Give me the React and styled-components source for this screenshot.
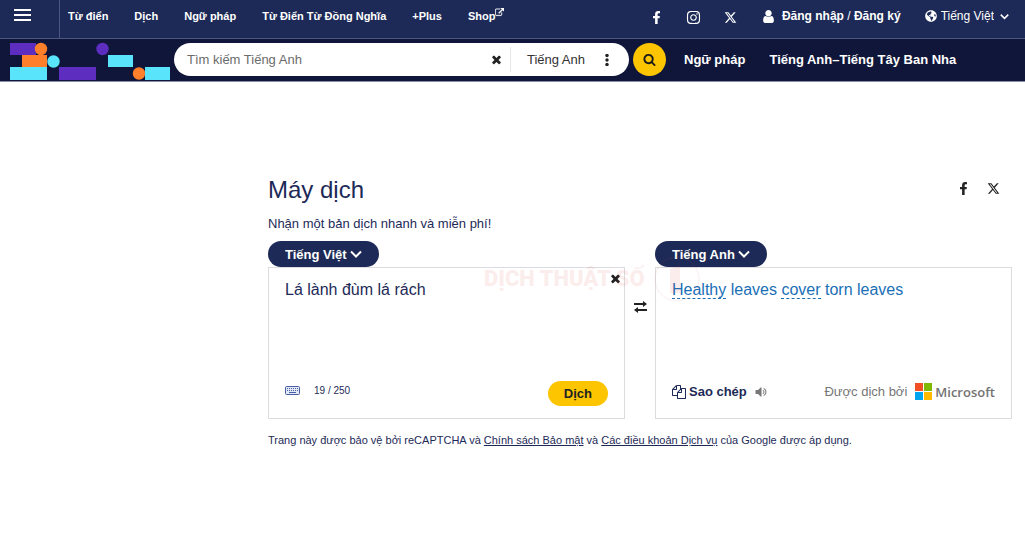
import React, { useState } from "react";
import styled, { createGlobalStyle } from "styled-components";
import { FaFacebookF, FaInstagram, FaGlobeAmericas } from "react-icons/fa";
import { FaXTwitter } from "react-icons/fa6";

const GlobalStyle = createGlobalStyle`
  * {
    box-sizing: border-box;
  }
  body {
    margin: 0;
    background: #fff;
    color: #1d2a57;
    font-family: "Liberation Sans", Arial, sans-serif;
    font-size: 13px;
  }
  button, input, select, textarea {
    font: inherit;
    color: inherit;
    border: 0;
    padding: 0;
    margin: 0;
    background: none;
    outline: 0;
  }
  button {
    cursor: pointer;
  }
  a {
    color: inherit;
  }
  svg {
    display: block;
    flex: none;
  }
`;

const TopBar = styled.header`
  display: flex;
  align-items: stretch;
  height: 39px;
  background: #1d2a57;
  border-bottom: 1px solid #4b5680;
  color: #fff;
`;

const MenuButton = styled.button`
  width: 60px;
  padding: 0 0 8px 14px;
  border-right: 1px solid #4b5680;
`;

const NavLinks = styled.nav`
  display: flex;
  gap: 26px;
  padding: 8px 0 0 8px;
  font-size: 11px;
  line-height: 16px;
  font-weight: 700;
`;

const NavLink = styled.a`
  display: flex;
  text-decoration: none;
  white-space: nowrap;
`;

const TopRight = styled.div`
  display: flex;
  gap: 24px;
  margin-left: auto;
  padding: 8px 16px 0 0;
  line-height: 16px;
`;

const Socials = styled.div`
  display: flex;
  align-items: center;
  gap: ${(props) => props.$gap};
  height: ${(props) => props.$height};
  color: ${(props) => props.$color};
`;

const IconLink = styled.a`
  display: flex;
`;

const Account = styled.div`
  display: flex;
  align-items: center;
  gap: 6px;
  height: 16px;
  white-space: nowrap;
  font-size: 12px;

  a {
    font-weight: 700;
    text-decoration: none;
  }
`;

const SiteLanguage = styled.label`
  display: flex;
  gap: 4px;
  align-items: center;
  height: 16px;
  font-size: 12px;
`;

const SelectBox = styled.span`
  display: grid;
  align-items: center;

  select,
  svg {
    grid-area: 1 / 1;
  }
  select {
    appearance: none;
    field-sizing: content;
    padding-right: ${(props) => props.$space};
    cursor: pointer;
  }
  option {
    color: #1d2a57;
  }
  svg {
    justify-self: end;
    pointer-events: none;
  }
`;

const SearchBar = styled.div`
  display: flex;
  align-items: center;
  height: 43px;
  padding: 0 0 1px 10px;
  background: #0f163a;
  border-bottom: 1px solid #8b8fa6;
  color: #fff;
`;

const LogoLink = styled.a`
  align-self: flex-end;
`;

const SearchForm = styled.form`
  display: flex;
  align-items: center;
  gap: 4px;
  flex: 0 1 492px;
  margin: 0 18px 0 4px;
`;

const SearchField = styled.div`
  display: flex;
  align-items: center;
  flex: 1;
  height: 33px;
  border-radius: 17px;
  background: #fff;
  color: #222;

  input {
    flex: 1;
    min-width: 0;
    padding-left: 13px;
  }
  input::placeholder {
    color: #6b6b6b;
  }
`;

const Dictionary = styled.button`
  display: flex;
  align-items: center;
  gap: 16px;
  height: 25px;
  margin-left: 7px;
  padding: 0 16px;
  border-left: 1px solid #e6e6ea;
  color: #333;
`;

const SearchButton = styled.button`
  display: grid;
  place-items: center;
  width: 33px;
  height: 33px;
  border-radius: 50%;
  background: #fdc400;
  color: #1a1a1a;
`;

const SearchLinks = styled.nav`
  display: flex;
  gap: 24px;
  font-weight: 700;
  white-space: nowrap;
`;

const Main = styled.main`
  padding: 92px 13px 0 268px;
`;

const Heading = styled.div`
  display: flex;
  justify-content: space-between;
  padding-right: 12px;
`;

const Title = styled.h1`
  margin: 0;
  font-size: 24px;
  line-height: 32px;
  font-weight: 400;
`;

const Intro = styled.p`
  margin: 10px 0 9px;
  line-height: 16px;
`;

const Translator = styled.div`
  position: relative;
  display: grid;
  grid-template-columns: 1fr 30px 1fr;
`;

const LanguagePill = styled.label`
  display: inline-flex;
  align-items: center;
  height: 26px;
  padding: 0 17px;
  border-radius: 13px;
  background: #1d2a57;
  color: #fff;
  font-weight: 700;
`;

const Panel = styled.div`
  display: flex;
  flex-direction: column;
  justify-content: space-between;
  height: 152px;
  padding: 12px 16px;
  border: 1px solid #dcdce0;
`;

const PanelTop = styled.div`
  display: flex;
  align-items: flex-start;
  margin-right: -14px;
`;

const SourceText = styled.textarea`
  flex: 1;
  height: 80px;
  resize: none;
  font-size: 16px;
  line-height: 20px;
`;

const IconButton = styled.button`
  margin: ${(props) => props.$margin};
`;

const Translation = styled.p`
  margin: 0;
  font-size: 16px;
  line-height: 20px;
  color: #1a6fb5;
`;

const Word = styled.a`
  text-decoration: none;
  border-bottom: 1px dashed #1a6fb5;
`;

const PanelFoot = styled.div`
  display: flex;
  align-items: center;
  height: 26px;
  padding-bottom: ${(props) => props.$lift};
`;

const Counter = styled.span`
  margin: 0 auto 6px 14px;
  font-size: 10px;
`;

const TranslateButton = styled.button`
  height: 25px;
  padding: 0 16px;
  border-radius: 13px;
  background: #fdc400;
  color: #222;
  font-weight: 700;
`;

const SwapButton = styled.button`
  align-self: start;
  justify-self: center;
  margin-top: 60px;
`;

const CopyButton = styled.button`
  display: flex;
  align-items: center;
  gap: 3px;
  margin-right: 8px;
  font-weight: 700;
`;

const Credit = styled.span`
  display: flex;
  align-items: center;
  gap: 8px;
  margin-left: auto;
  color: #767676;
`;

const Microsoft = styled.span`
  display: flex;
  align-items: center;
  gap: 3px;
  color: #737373;
  font-family: "Open Sans", sans-serif;
  font-weight: 600;
`;

const Legal = styled.p`
  margin: 14px 0 0;
  font-size: 11px;
  line-height: 14px;
`;

const Watermark = styled.div`
  position: absolute;
  top: 15px;
  left: calc(50% - 156px);
  display: flex;
  align-items: center;
  gap: 8px;
  opacity: 0.09;
  color: #e04848;
  pointer-events: none;
`;

const WatermarkName = styled.span`
  display: block;
  font-family: Roboto, sans-serif;
  font-size: 22px;
  line-height: 28px;
  font-weight: 900;
  white-space: nowrap;
`;

// 1792-unit icons share one wrapper
function Glyph({ d, size, color = "currentColor", outline = 0 }) {
  return (
    <svg
      width={size}
      height={size}
      viewBox="0 0 1792 1792"
      fill={color}
      stroke={color}
      strokeWidth={outline}
      aria-hidden="true"
    >
      <path d={d} />
    </svg>
  );
}

const icons = {
  external:
    "M1408 928v320q0 119-84.5 203.5t-203.5 84.5h-832q-119 0-203.5-84.5t-84.5-203.5v-832q0-119 84.5-203.5t203.5-84.5h704q14 0 23 9t9 23v64q0 14-9 23t-23 9h-704q-66 0-113 47t-47 113v832q0 66 47 113t113 47h832q66 0 113-47t47-113v-320q0-14 9-23t23-9h64q14 0 23 9t9 23zm384-864v512q0 26-19 45t-45 19-45-19l-176-176-652 652q-10 10-23 10t-23-10l-114-114q-10-10-10-23t10-23l652-652-176-176q-19-19-19-45t19-45 45-19h512q26 0 45 19t19 45z",
  times:
    "M1490 1322q0 40-28 68l-136 136q-28 28-68 28t-68-28l-294-294-294 294q-28 28-68 28t-68-28l-136-136q-28-28-28-68t28-68l294-294-294-294q-28-28-28-68t28-68l136-136q28-28 68-28t68 28l294 294 294-294q28-28 68-28t68 28l136 136q28 28 28 68t-28 68l-294 294 294 294q28 28 28 68z",
  search:
    "M1216 832q0-185-131.5-316.5t-316.5-131.5-316.5 131.5-131.5 316.5 131.5 316.5 316.5 131.5 316.5-131.5 131.5-316.5zm512 832q0 52-38 90t-90 38q-54 0-90-38l-343-342q-179 124-399 124-143 0-273.5-55.5t-225-150-150-225-55.5-273.5 55.5-273.5 150-225 225-150 273.5-55.5 273.5 55.5 225 150 150 225 55.5 273.5q0 220-124 399l343 343q37 37 37 90z",
  user: "M1536 1399q0 109-62.5 187t-150.5 78h-854q-88 0-150.5-78t-62.5-187q0-85 8.5-160.5t31.5-152 58.5-131 94-89 134.5-34.5q131 128 313 128t313-128q76 0 134.5 34.5t94 89 58.5 131 31.5 152 8.5 160.5zm-256-887q0 159-112.5 271.5t-271.5 112.5-271.5-112.5-112.5-271.5 112.5-271.5 271.5-112.5 271.5 112.5 112.5 271.5z",
  copy: "M1696 384q40 0 68 28t28 68v1216q0 40-28 68t-68 28h-960q-40 0-68-28t-28-68v-288h-544q-40 0-68-28t-28-68v-672q0-40 20-88t48-76l408-408q28-28 76-48t88-20h416q40 0 68 28t28 68v328q68-40 128-40h416zm-544 213l-299 299h299v-299zm-640-384l-299 299h299v-299zm196 647l316-316v-416h-384v416q0 40-28 68t-68 28h-416v640h512v-256q0-40 20-88t48-76zm956 804v-1152h-384v416q0 40-28 68t-68 28h-416v640h896z",
  volume:
    "M832 352v1088q0 26-19 45t-45 19-45-19l-333-333h-262q-26 0-45-19t-19-45v-384q0-26 19-45t45-19h262l333-333q19-19 45-19t45 19 19 45zm384 544q0 76-42.5 141.5t-112.5 93.5q-10 5-25 5-26 0-45-18.5t-19-45.5q0-21 12-35.5t29-25 34-23 29-36 12-56.5-12-56.5-29-36-34-23-29-25-12-35.5q0-27 19-45.5t45-18.5q15 0 25 5 70 27 112.5 93t42.5 142zm256 0q0 153-85 282.5t-225 188.5q-13 5-25 5-27 0-46-19t-19-45q0-39 39-59 56-29 76-44 74-54 115.5-135.5t41.5-173.5-41.5-173.5-115.5-135.5q-20-15-76-44-39-20-39-59 0-26 19-45t45-19q13 0 26 5 140 59 225 188.5t85 282.5z",
};

function Chevron({ width, stroke }) {
  return (
    <svg width={width} height={width} viewBox="0 0 12 12" aria-hidden="true">
      <path d="M1 3.5l5 5 5-5" fill="none" stroke="#fff" strokeWidth={stroke} />
    </svg>
  );
}

function Logo() {
  return (
    <svg width="160" height="38" viewBox="0 0 160 38" aria-hidden="true">
      <g fill="#5c2dbe">
        <rect y="1" width="26" height="12" />
        <rect x="49" y="25" width="37" height="13" />
        <circle cx="92.500" cy="7" r="6.200" />
      </g>
      <g fill="#ff7f2a">
        <rect x="12" y="13" width="25" height="12" />
        <circle cx="31" cy="7" r="6.200" />
        <circle cx="129" cy="31.500" r="6.200" />
      </g>
      <g fill="#59e4fb">
        <rect y="25" width="37" height="13" />
        <circle cx="43.500" cy="19.500" r="6.200" />
        <rect x="98" y="13" width="25" height="12" />
        <rect x="135" y="25" width="25" height="13" />
      </g>
    </svg>
  );
}

const languages = ["Tiếng Việt", "Tiếng Anh"];
const navItems = ["Từ điển", "Dịch", "Ngữ pháp", "Từ Điển Từ Đồng Nghĩa", "+Plus"];

function LanguageSelect({ value, onChange, label, chevron, space }) {
  return (
    <SelectBox $space={space}>
      <select aria-label={label} value={value} onChange={(e) => onChange(e.target.value)}>
        {languages.map((lang) => (
          <option key={lang}>{lang}</option>
        ))}
      </select>
      <Chevron width={chevron} stroke={2} />
    </SelectBox>
  );
}

export default function App() {
  const [text, setText] = useState("Lá lành đùm lá rách");
  const [query, setQuery] = useState("");
  const [siteLang, setSiteLang] = useState("Tiếng Việt");
  const [from, setFrom] = useState("Tiếng Việt");
  const [to, setTo] = useState("Tiếng Anh");

  const handleSwap = () => {
    setFrom(to);
    setTo(from);
  };

  return (
    <>
      <GlobalStyle />
      <TopBar>
        <MenuButton aria-label="Menu">
          <svg width="17" height="13" viewBox="0 0 17 13" fill="#fff">
            <path d="M0 0h17v2H0zM0 5h17v2H0zM0 10h17v2H0z" />
          </svg>
        </MenuButton>
        <NavLinks>
          {navItems.map((item) => (
            <NavLink key={item} href="#">
              {item}
            </NavLink>
          ))}
          <NavLink href="#">
            Shop
            <Glyph d={icons.external} size={9} outline={60} />
          </NavLink>
        </NavLinks>
        <TopRight>
          <Socials $gap="23px" $height="18px" $color="#fff">
            <IconLink href="#" aria-label="Facebook">
              <FaFacebookF size={13} />
            </IconLink>
            <IconLink href="#" aria-label="Instagram">
              <FaInstagram size={15} />
            </IconLink>
            <IconLink href="#" aria-label="X">
              <FaXTwitter size={13} />
            </IconLink>
          </Socials>
          <Account>
            <Glyph d={icons.user} size={15} />
            <span>
              <a href="#">Đăng nhập</a> / <a href="#">Đăng ký</a>
            </span>
          </Account>
          <SiteLanguage>
            <FaGlobeAmericas size={12} />
            <LanguageSelect
              label="Ngôn ngữ"
              value={siteLang}
              onChange={setSiteLang}
              chevron={9}
              space="15px"
            />
          </SiteLanguage>
        </TopRight>
      </TopBar>

      <SearchBar>
        <LogoLink href="#" aria-label="Trang chủ">
          <Logo />
        </LogoLink>
        <SearchForm onSubmit={(e) => e.preventDefault()}>
          <SearchField>
            <input
              aria-label="Tìm kiếm"
              placeholder="Tìm kiếm Tiếng Anh"
              value={query}
              onChange={(e) => setQuery(e.target.value)}
            />
            <IconButton type="button" aria-label="Xóa" onClick={() => setQuery("")}>
              <Glyph d={icons.times} size={13} />
            </IconButton>
            <Dictionary type="button">
              Tiếng Anh
              <svg width="12" height="12" viewBox="0 0 12 12" fill="#222">
                <circle cx="6" cy="1.500" r="1.700" />
                <circle cx="6" cy="6" r="1.700" />
                <circle cx="6" cy="10.500" r="1.700" />
              </svg>
            </Dictionary>
          </SearchField>
          <SearchButton aria-label="Tìm kiếm">
            <Glyph d={icons.search} size={13} />
          </SearchButton>
        </SearchForm>
        <SearchLinks>
          <NavLink href="#">Ngữ pháp</NavLink>
          <NavLink href="#">Tiếng Anh–Tiếng Tây Ban Nha</NavLink>
        </SearchLinks>
      </SearchBar>

      <Main>
        <Heading>
          <Title>Máy dịch</Title>
          <Socials $gap="17px" $height="28px" $color="#222">
            <IconLink href="#" aria-label="Facebook">
              <FaFacebookF size={13} />
            </IconLink>
            <IconLink href="#" aria-label="X">
              <FaXTwitter size={13} />
            </IconLink>
          </Socials>
        </Heading>
        <Intro>Nhận một bản dịch nhanh và miễn phí!</Intro>

        <Translator>
          <section>
            <LanguagePill>
              <LanguageSelect
                label="Dịch từ"
                value={from}
                onChange={setFrom}
                chevron={12}
                space="15px"
              />
            </LanguagePill>
            <Panel>
              <PanelTop>
                <SourceText
                  aria-label="Văn bản"
                  maxLength={250}
                  value={text}
                  onChange={(e) => setText(e.target.value)}
                />
                <IconButton $margin="-8px 0 0" aria-label="Xóa" onClick={() => setText("")}>
                  <Glyph d={icons.times} size={13} color="#222" />
                </IconButton>
              </PanelTop>
              <PanelFoot>
                <IconButton $margin="0 0 6px" aria-label="Bàn phím">
                  <svg width="15" height="9" viewBox="0 0 15 9" fill="none" stroke="#4a5fa5">
                    <rect x=".5" y=".5" width="14" height="8" rx="1" fill="#e3e8f6" />
                    <path d="M2 2.500h11M2 4.500h11" strokeDasharray="1 1" />
                    <path d="M4 6.500h7" />
                  </svg>
                </IconButton>
                <Counter>{text.length} / 250</Counter>
                <TranslateButton>Dịch</TranslateButton>
              </PanelFoot>
            </Panel>
          </section>

          <SwapButton aria-label="Đổi ngôn ngữ" onClick={handleSwap}>
            <svg width="13" height="12" viewBox="0 0 13 12" fill="#222">
              <path d="M0 2h9V0l4 3-4 3V4H0zM13 8H4V6L0 9l4 3v-2h9z" />
            </svg>
          </SwapButton>

          <section>
            <LanguagePill>
              <LanguageSelect
                label="Dịch sang"
                value={to}
                onChange={setTo}
                chevron={12}
                space="15px"
              />
            </LanguagePill>
            <Panel>
              <Translation>
                <Word href="#">Healthy</Word> leaves <Word href="#">cover</Word> torn leaves
              </Translation>
              <PanelFoot $lift="3px">
                <CopyButton>
                  <Glyph d={icons.copy} size={14} />
                  Sao chép
                </CopyButton>
                <IconButton aria-label="Nghe">
                  <Glyph d={icons.volume} size={14} color="#777" />
                </IconButton>
                <Credit>
                  Được dịch bởi
                  <Microsoft>
                    <svg width="17" height="17" viewBox="0 0 17 17">
                      <rect width="8" height="8" fill="#f25022" />
                      <rect x="9" width="8" height="8" fill="#7fba00" />
                      <rect y="9" width="8" height="8" fill="#00a4ef" />
                      <rect x="9" y="9" width="8" height="8" fill="#ffb900" />
                    </svg>
                    Microsoft
                  </Microsoft>
                </Credit>
              </PanelFoot>
            </Panel>
          </section>

          <Watermark aria-hidden="true">
            <WatermarkName>DỊCH THUẬT SỐ</WatermarkName>
            <svg width="48" height="46" viewBox="0 0 48 46">
              <circle cx="24" cy="23" r="22" fill="none" stroke="#e04848" />
              <path d="M17 13l10-4v28H17z" fill="#e04848" />
            </svg>
          </Watermark>
        </Translator>

        <Legal>
          Trang này được bảo vệ bởi reCAPTCHA và <a href="#">Chính sách Bảo mật</a> và{" "}
          <a href="#">Các điều khoản Dịch vụ</a> của Google được áp dụng.
        </Legal>
      </Main>
    </>
  );
}
